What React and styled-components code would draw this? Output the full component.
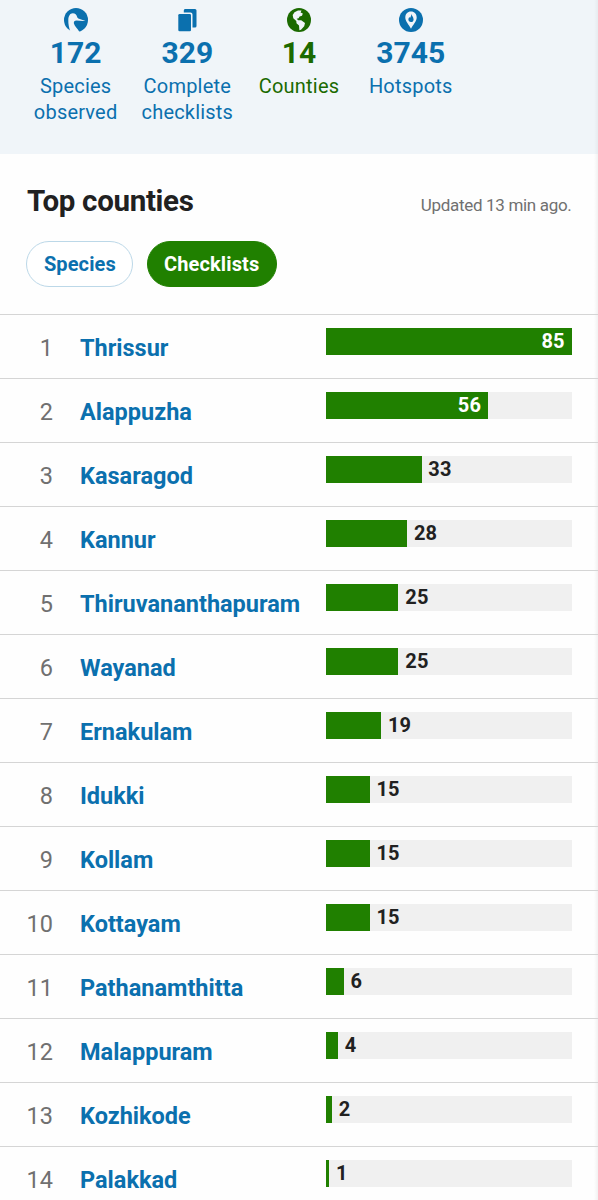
import React from 'react';
import styled, { createGlobalStyle } from 'styled-components';

const Global = createGlobalStyle`
  *, *::before, *::after { box-sizing: border-box; }
  body {
    margin: 0;
    background: #fff;
    font-family: Roboto, "Liberation Sans", sans-serif;
    color: #212121;
    overflow: hidden;
  }
`;

const Page = styled.main`
  width: 598px;
  height: 1200px;
  overflow: hidden;
  background: linear-gradient(to right, transparent 594px, rgba(0, 0, 0, 0.05)) #fefefe;
`;

const Stats = styled.nav`
  display: flex;
  height: 154.4px;
  padding: 8px 0 0 19.8px;
  background: linear-gradient(to right, transparent 594px, rgba(0, 0, 0, 0.04)) #f0f5f9;
`;

const Stat = styled.a`
  display: flex;
  flex-direction: column;
  align-items: center;
  width: 111.7px;
  color: ${(p) => (p.$active ? '#1b6a00' : '#0b70ae')};
  text-align: center;
`;

const StatIcon = styled.svg`
  display: block;
  width: 24px;
  height: 24px;
  fill: currentColor;
`;

const StatNumber = styled.strong`
  font-size: 30px;
  font-weight: 700;
  line-height: 34px;
  margin-top: 4px;
  letter-spacing: 0;
`;

const StatLabel = styled.span`
  font-size: 20px;
  line-height: 26.6px;
  letter-spacing: 0.2px;
  margin-top: 2.6px;
  width: 100px;
`;

const Heading = styled.header`
  display: flex;
  justify-content: space-between;
  align-items: baseline;
  padding: 28.6px 26.5px 0 27px;
  height: 86.6px;
`;

const Title = styled.h2`
  margin: 0;
  font-size: 29.5px;
  font-weight: 700;
  line-height: 36px;
  letter-spacing: -0.32px;
`;

const Updated = styled.span`
  font-size: 17px;
  letter-spacing: -0.32px;
  color: #707070;
`;

const Tabs = styled.div`
  display: flex;
  gap: 13.2px;
  padding-left: 26.4px;
  height: 73px;
`;

const Pill = styled.button`
  height: 46px;
  padding: 0 16.5px;
  border: 1.5px solid ${(p) => (p.$active ? '#208000' : '#bcd8e8')};
  border-radius: 23px;
  background: ${(p) => (p.$active ? '#208000' : '#fff')};
  color: ${(p) => (p.$active ? '#fff' : '#0b70ae')};
  font: 700 20px Roboto, sans-serif;
  letter-spacing: 0.12px;
`;

const List = styled.ol`
  list-style: none;
  margin: 0;
  padding: 0;
`;

const Row = styled.li`
  display: grid;
  grid-template-columns: 53px 246.3px 245.3px;
  column-gap: 0;
  height: 64.02px;
  border-top: 1.5px solid #d5d5d5;
  padding-top: 13.3px;
`;

const Rank = styled.span`
  padding-top: 4px;
  font-size: 23.5px;
  line-height: 32px;
  color: #707070;
  text-align: right;
`;

const Name = styled.a`
  padding: 4px 0 0 27px;
  font-size: 23.5px;
  font-weight: 700;
  line-height: 32px;
  color: #0b70ae;
  margin-right: -27px;
`;

const Chart = styled.div`
  grid-column: 3;
  display: flex;
  width: 245.3px;
  height: 26.6px;
  margin-left: 27px;
  background: #f0f0f0;
`;

const Bar = styled.div`
  flex: none;
  height: 100%;
  background: #208000;
  display: flex;
  justify-content: flex-end;
`;

const Value = styled.span`
  padding: 0 6.8px;
  font-size: 20px;
  font-weight: 700;
  line-height: 26px;
  letter-spacing: 0.2px;
  color: ${(p) => (p.$inside ? '#fff' : '#212121')};
`;

const BirdIcon = () => (
  <StatIcon viewBox="0 0 24 24">
    <circle cx="12" cy="12" r="12" />
    <path
      fill="#f0f5f9"
      d="M6.500 24C5 20 4.200 16 4.300 12C4.400 8 6 5.200 8.800 5.200C11.200 5.200 12.600 6.600 13.200 9C13.500 10 14 10.300 15 10.700L21.500 12.900C18 13.200 15 12.700 12.500 12.600C10.500 12.600 9.600 13.800 9.900 15.500C10.600 18.500 13.500 20.500 15.500 24Z"
    />
  </StatIcon>
);

const ChecklistIcon = () => (
  <StatIcon viewBox="0 0 24 24">
    <path d="M10 1H20Q21.500 1 21.500 2.500V18Q21.500 19.500 20 19.500H17.500V6.500Q17.500 4.500 15.500 4.500H8.800V2.500Q8.800 1 10 1Z" />
    <rect x="3.300" y="6" width="12.700" height="17.200" rx="1.300" />
  </StatIcon>
);

const GlobeIcon = () => (
  <StatIcon viewBox="0 0 24 24">
    <circle cx="12" cy="12" r="12" />
    <path fill="#f0f5f9" d="M7.500 4.200L11 2.500L14.500 2.600L13.600 4.600L15.800 5.500L15 7.700L12.600 8.500L11.600 10.300L9.700 10.800L11.200 12.300L14.200 12.200L18 15L17.200 18.300L14 21.800L12.400 22.200L12 17.500L9.500 15.300L9.300 12.900L6.300 10.200L5.700 7Z" />
  </StatIcon>
);

const HotspotIcon = () => (
  <StatIcon viewBox="0 0 24 24">
    <circle cx="12" cy="12" r="12" />
    <path fill="#f0f5f9" d="M12 3.600C8.600 3.600 6.300 6.200 6.300 9.500C6.300 13.500 10 16.500 12 20.800C14 16.500 17.700 13.500 17.700 9.500C17.700 6.200 15.400 3.600 12 3.600Z" />
    <path d="M12.300 5.800C12.400 7.800 14.600 8.900 14.600 11.400C14.600 13 13.500 14 12 14C10.500 14 9.400 13 9.400 11.500C9.400 10.300 10 9.600 10.500 8.900L11 9.900C11.900 8.800 12.300 7.400 12.300 5.800Z" />
  </StatIcon>
);

const stats = [
  { icon: BirdIcon, value: 172, label: 'Species observed' },
  { icon: ChecklistIcon, value: 329, label: 'Complete checklists' },
  { icon: GlobeIcon, value: 14, label: 'Counties', active: true },
  { icon: HotspotIcon, value: 3745, label: 'Hotspots' },
];

const counties = [
  ['Thrissur', 85], ['Alappuzha', 56], ['Kasaragod', 33], ['Kannur', 28],
  ['Thiruvananthapuram', 25], ['Wayanad', 25], ['Ernakulam', 19], ['Idukki', 15],
  ['Kollam', 15], ['Kottayam', 15], ['Pathanamthitta', 6], ['Malappuram', 4],
  ['Kozhikode', 2], ['Palakkad', 1],
];

export default function App() {
  return (
    <Page>
      <Global />
      <Stats>
        {stats.map(({ icon: Icon, value, label, active }) => (
          <Stat key={label} $active={active}>
            <Icon />
            <StatNumber>{value}</StatNumber>
            <StatLabel>{label}</StatLabel>
          </Stat>
        ))}
      </Stats>
      <Heading>
        <Title>Top counties</Title>
        <Updated>Updated 13 min ago.</Updated>
      </Heading>
      <Tabs>
        <Pill>Species</Pill>
        <Pill $active>Checklists</Pill>
      </Tabs>
      <List>
        {counties.map(([name, count], i) => {
          const inside = count > 40;
          return (
            <Row key={name}>
              <Rank>{i + 1}</Rank>
              <Name>{name}</Name>
              <Chart>
                <Bar style={{ width: `${(count / 85) * 100}%` }}>
                  {inside && <Value $inside>{count}</Value>}
                </Bar>
                {!inside && <Value>{count}</Value>}
              </Chart>
            </Row>
          );
        })}
      </List>
    </Page>
  );
}
